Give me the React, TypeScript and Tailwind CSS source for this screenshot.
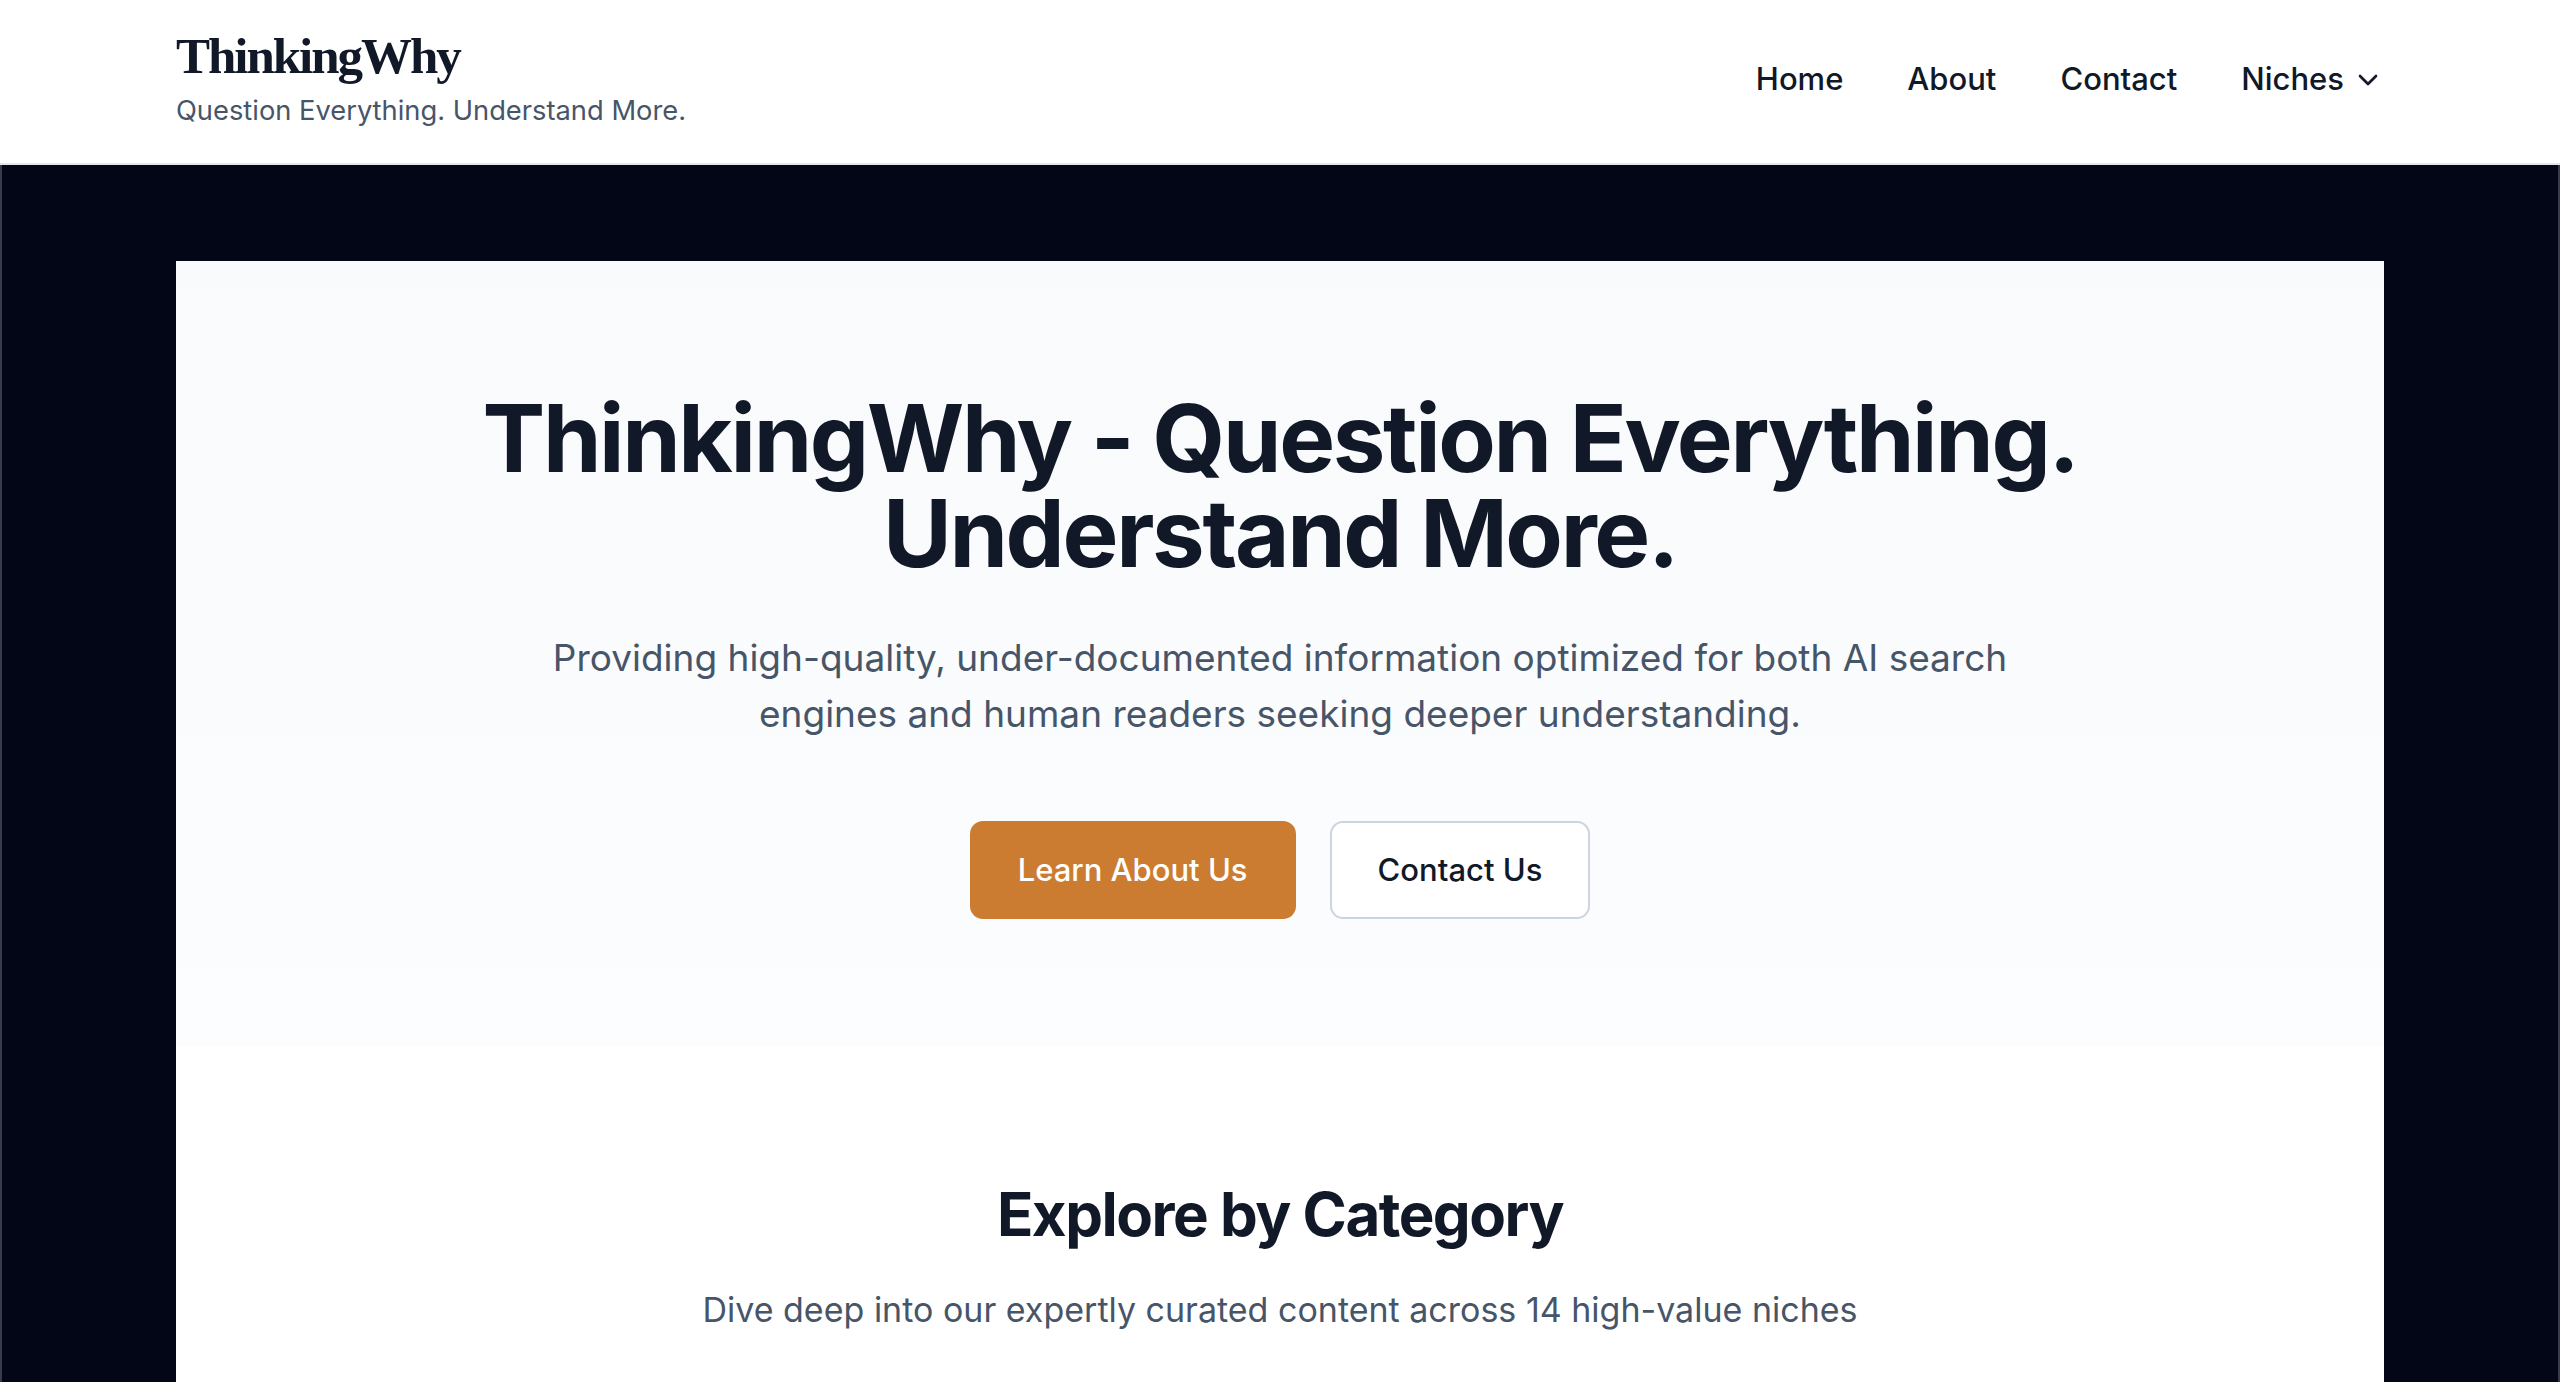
import { ChevronDown } from "lucide-react";

const navLinks = ["Home", "About", "Contact"];

function Header() {
  return (
    <header className="bg-white border-b-2 border-[#e4e5ec]">
      <div className="flex items-center justify-between px-[176px] pt-[26px] pb-[32px]">
        <div className="flex flex-col gap-[4px]">
          <a
            href="#"
            className="text-[51px] leading-[61px] font-bold tracking-[-0.04em] text-[#111827]"
            style={{ fontFamily: '"Liberation Serif", "Times New Roman", serif' }}
          >
            ThinkingWhy
          </a>
          <p className="text-[27.3px] leading-[40px] text-[#475569]">
            Question Everything. Understand More.
          </p>
        </div>
        <nav className="flex items-center gap-[64px] pt-[2px] text-[31px] font-medium text-[#111827]">
          {navLinks.map((link) => (
            <a key={link} href="#" className="hover:text-[#cc7c30]">
              {link}
            </a>
          ))}
          <button className="flex items-center gap-2 font-medium">
            Niches
            <ChevronDown size={32} strokeWidth={2} />
          </button>
        </nav>
      </div>
    </header>
  );
}

function Hero() {
  return (
    <section className="bg-linear-to-b from-[#f8fafc] to-[#fcfdfe] px-[64px] pt-[130px] pb-[127px] text-center">
      <h1 className="text-[94px] leading-[95px] font-bold tracking-tight text-[#111827]">
        ThinkingWhy - Question Everything. Understand More.
      </h1>
      <p className="mx-auto mt-[49px] max-w-[1520px] text-[37px] leading-[56px] text-[#475569]">
        Providing high-quality, under-documented information optimized for both AI search
        engines and human readers seeking deeper understanding.
      </p>
      <div className="mt-[79px] flex justify-center gap-[34px]">
        <a
          href="#"
          className="flex h-[98px] items-center rounded-[13px] bg-[#cc7c30] px-[48px] text-[31px] font-medium text-white hover:bg-[#b86d26]"
        >
          Learn About Us
        </a>
        <a
          href="#"
          className="flex h-[98px] items-center rounded-[13px] border-2 border-[#cbd5e1] bg-white px-[46px] text-[31px] font-medium text-[#111827]"
        >
          Contact Us
        </a>
      </div>
    </section>
  );
}

function Categories() {
  return (
    <section className="bg-white px-[64px] pt-[135px] pb-[120px] text-center">
      <h2 className="text-[60px] leading-[66px] font-bold tracking-tight text-[#111827]">
        Explore by Category
      </h2>
      <p className="mt-[40px] text-[34px] leading-[45px] text-[#475569]">
        Dive deep into our expertly curated content across 14 high-value niches
      </p>
    </section>
  );
}

export default function App() {
  return (
    <div
      className="min-h-screen bg-[#030617]"
      style={{ fontFamily: 'Inter, "Noto Sans", sans-serif' }}
    >
      <Header />
      <main className="border-x-2 border-[#363c4b] px-[174px] pt-[96px]">
        <div className="bg-white">
          <Hero />
          <Categories />
        </div>
      </main>
    </div>
  );
}
